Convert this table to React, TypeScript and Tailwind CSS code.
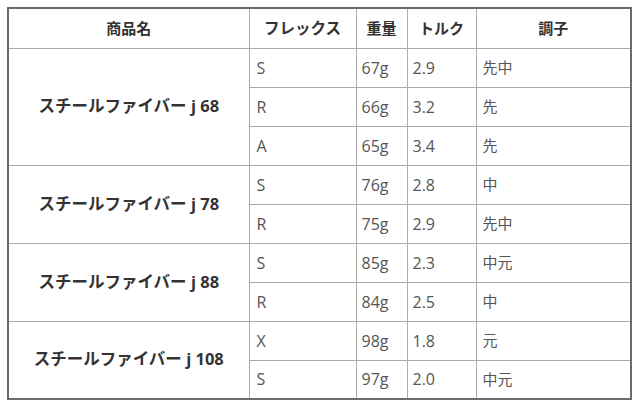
type Spec = {
  flex: string;
  weight: string;
  torque: string;
  kick: string;
};

type Shaft = {
  name: string;
  specs: Spec[];
};

const shafts: Shaft[] = [
  {
    name: "スチールファイバー j 68",
    specs: [
      { flex: "S", weight: "67g", torque: "2.9", kick: "先中" },
      { flex: "R", weight: "66g", torque: "3.2", kick: "先" },
      { flex: "A", weight: "65g", torque: "3.4", kick: "先" },
    ],
  },
  {
    name: "スチールファイバー j 78",
    specs: [
      { flex: "S", weight: "76g", torque: "2.8", kick: "中" },
      { flex: "R", weight: "75g", torque: "2.9", kick: "先中" },
    ],
  },
  {
    name: "スチールファイバー j 88",
    specs: [
      { flex: "S", weight: "85g", torque: "2.3", kick: "中元" },
      { flex: "R", weight: "84g", torque: "2.5", kick: "中" },
    ],
  },
  {
    name: "スチールファイバー j 108",
    specs: [
      { flex: "X", weight: "98g", torque: "1.8", kick: "元" },
      { flex: "S", weight: "97g", torque: "2.0", kick: "中元" },
    ],
  },
];

const font = {
  fontFamily: '"Open Sans", "Noto Sans CJK JP", sans-serif',
};

function App() {
  return (
    <div className="w-[640px] h-[410px] bg-white pt-[7px] pl-[7px]" style={font}>
      <table className="w-[625px] border-collapse border-2 border-[#6b6b6b] table-fixed text-[15px]">
        <colgroup>
          <col className="w-[241px]" />
          <col className="w-[107px]" />
          <col className="w-[51px]" />
          <col className="w-[69px]" />
          <col />
        </colgroup>

        <thead>
          <tr className="h-[40px]">
            <th className="border border-[#aaaaaa] font-bold text-[#333] text-center">商品名</th>
            <th className="border border-[#aaaaaa] font-bold text-[#333] text-center text-[15.5px]">フレックス</th>
            <th className="border border-[#aaaaaa] font-bold text-[#333] text-center">重量</th>
            <th className="border border-[#aaaaaa] font-bold text-[#333] text-center">トルク</th>
            <th className="border border-[#aaaaaa] font-bold text-[#333] text-center">調子</th>
          </tr>
        </thead>

        <tbody>
          {shafts.map((shaft) =>
            shaft.specs.map((spec, i) => (
              <tr key={shaft.name + i} className="h-[39px]">
                {i === 0 && (
                  <td
                    rowSpan={shaft.specs.length}
                    className="border border-[#aaaaaa] font-bold text-[#333] text-center align-middle text-[16.5px]"
                  >
                    {shaft.name}
                  </td>
                )}
                <td className="border border-[#aaaaaa] text-[#555] text-[16px] px-[7px]">{spec.flex}</td>
                <td className="border border-[#aaaaaa] text-[#555] text-[16px] px-[5px]">{spec.weight}</td>
                <td className="border border-[#aaaaaa] text-[#555] text-[16px] px-[5px]">{spec.torque}</td>
                <td className="border border-[#aaaaaa] text-[#555] text-[15px] px-[6px]">{spec.kick}</td>
              </tr>
            ))
          )}
        </tbody>
      </table>
    </div>
  );
}

export default App;
